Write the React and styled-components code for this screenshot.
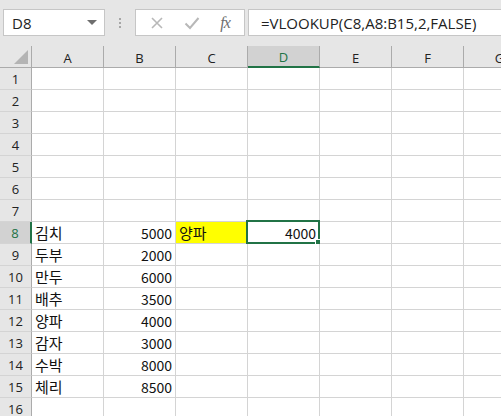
import React from "react";
import styled, { createGlobalStyle, css } from "styled-components";

const GREEN = "#217346";
const GRID = "#d4d4d4";
const HEAD_LINE = "#ababab";

var GlobalStyle = createGlobalStyle`
  html, body {
    margin: 0;
    padding: 0;
    background: #fff;
    overflow: hidden;
  }
  body {
    font-family: "Noto Sans CJK KR", "Noto Sans", sans-serif;
  }
`;

var Window = styled.div`
  width: 501px;
  height: 416px;
  overflow: hidden;
  background: #fff;
`;

var TopBar = styled.div`
  height: 46px;
  background: #e6e6e6;
  display: flex;
  align-items: flex-start;
  padding: 9px 0 0 3px;
  box-sizing: border-box;
`;

var Box = styled.div`
  height: 27px;
  box-sizing: border-box;
  background: #fff;
  border: 1px solid #c6c6c6;
  display: flex;
  align-items: center;
`;

var NameBox = styled(Box)`
  width: 102px;
  padding: 0 7px 0 8px;
  justify-content: space-between;
  font-family: "Open Sans", "Liberation Sans", sans-serif;
  font-size: 15px;
  color: #222;
`;

var Caret = styled.span`
  width: 0;
  height: 0;
  border-left: 5px solid transparent;
  border-right: 5px solid transparent;
  border-top: 5px solid #6e6e6e;
`;

var Dots = styled.div`
  width: 30px;
  height: 27px;
  display: flex;
  flex-direction: column;
  align-items: center;
  justify-content: center;
  gap: 2px;
  span {
    width: 2px;
    height: 2px;
    background: #a6a6a6;
  }
`;

var IconBox = styled(Box)`
  width: 110px;
  justify-content: space-around;
  padding: 0 4px;
  margin-right: 3px;
`;

var Fx = styled.span`
  font-family: "Liberation Serif", serif;
  font-style: italic;
  font-size: 16px;
  color: #6e6e6e;
  letter-spacing: -1px;
`;

var FormulaBox = styled(Box)`
  flex: 1;
  margin-right: -20px;
  padding-left: 12px;
  font-family: "Open Sans", "Liberation Sans", sans-serif;
  font-size: 15px;
  color: #222;
`;

var Sheet = styled.div`
  display: grid;
  grid-template-columns: 32px repeat(7, 72px);
  grid-auto-rows: 22px;
`;

var headBase = css`
  background: #e6e6e6;
  box-sizing: border-box;
  display: flex;
  align-items: center;
  justify-content: center;
  font-family: "Open Sans", "Liberation Sans", sans-serif;
  font-size: 13px;
  color: #222;
`;

var Corner = styled.div`
  ${headBase};
  position: relative;
  border-right: 1px solid ${HEAD_LINE};
  border-bottom: 1px solid ${HEAD_LINE};
  &:after {
    content: "";
    position: absolute;
    right: 3px;
    bottom: 3px;
    width: 0;
    height: 0;
    border-left: 14px solid transparent;
    border-bottom: 14px solid #b4b4b4;
  }
`;

var ColHeader = styled.div`
  ${headBase};
  border-right: 1px solid ${HEAD_LINE};
  border-bottom: 1px solid ${HEAD_LINE};
  padding-top: 2px;
  ${(p) =>
    p.$selected &&
    css`
      background: #d2d2d2;
      color: ${GREEN};
      border-bottom: 2px solid ${GREEN};
    `}
`;

var RowHeader = styled.div`
  ${headBase};
  border-right: 1px solid ${HEAD_LINE};
  border-bottom: 1px solid ${GRID};
  padding-top: 1px;
  ${(p) =>
    p.$selected &&
    css`
      background: #d2d2d2;
      color: ${GREEN};
      border-right: 2px solid ${GREEN};
    `}
`;

var Cell = styled.div`
  position: relative;
  box-sizing: border-box;
  border-right: 1px solid ${GRID};
  border-bottom: 1px solid ${GRID};
  background: ${(p) => p.$fill || "#fff"};
  display: flex;
  align-items: flex-end;
  justify-content: ${(p) => (p.$right ? "flex-end" : "flex-start")};
  padding: 0 3px 0 3px;
  font-size: ${(p) => (p.$right ? "14px" : "15px")};
  line-height: 20px;
  color: #111;
  white-space: nowrap;
`;

var Selection = styled.div`
  position: absolute;
  left: -2px;
  top: -2px;
  right: -1px;
  bottom: -1px;
  border: 2px solid ${GREEN};
  pointer-events: none;
`;

var FillHandle = styled.div`
  position: absolute;
  right: -4px;
  bottom: -4px;
  width: 5px;
  height: 5px;
  background: ${GREEN};
  border: 1px solid #fff;
`;

const columns = ["A", "B", "C", "D", "E", "F", "G"];

const data = {
  8: { A: "김치", B: "5000", C: "양파", D: "4000" },
  9: { A: "두부", B: "2000" },
  10: { A: "만두", B: "6000" },
  11: { A: "배추", B: "3500" },
  12: { A: "양파", B: "4000" },
  13: { A: "감자", B: "3000" },
  14: { A: "수박", B: "8000" },
  15: { A: "체리", B: "8500" },
};

const rows = Array.from({ length: 16 }, (_, i) => i + 1);

function CrossIcon() {
  return (
    <svg width="14" height="14" viewBox="0 0 14 14">
      <path d="M2 2 L12 12 M12 2 L2 12" stroke="#b8b8b8" strokeWidth="1.6" />
    </svg>
  );
}

function CheckIcon() {
  return (
    <svg width="16" height="14" viewBox="0 0 16 14">
      <path d="M1.5 7.5 L6 12 L14.5 2" stroke="#b8b8b8" strokeWidth="2" fill="none" />
    </svg>
  );
}

export default function App() {
  return (
    <Window>
      <GlobalStyle />
      <TopBar>
        <NameBox>
          <span>D8</span>
          <Caret />
        </NameBox>
        <Dots>
          <span />
          <span />
          <span />
        </Dots>
        <IconBox>
          <CrossIcon />
          <CheckIcon />
          <Fx>fx</Fx>
        </IconBox>
        <FormulaBox>=VLOOKUP(C8,A8:B15,2,FALSE)</FormulaBox>
      </TopBar>
      <Sheet>
        <Corner />
        {columns.map((c) => (
          <ColHeader key={c} $selected={c === "D"}>
            {c}
          </ColHeader>
        ))}
        {rows.map((r) => (
          <React.Fragment key={r}>
            <RowHeader $selected={r === 8}>{r}</RowHeader>
            {columns.map((c) => {
              const v = data[r] && data[r][c];
              const numeric = v && /^\d+$/.test(v);
              const active = r === 8 && c === "D";
              return (
                <Cell
                  key={c}
                  $right={numeric}
                  $fill={r === 8 && c === "C" ? "#ffff00" : null}
                >
                  {v}
                  {active && (
                    <Selection>
                      <FillHandle />
                    </Selection>
                  )}
                </Cell>
              );
            })}
          </React.Fragment>
        ))}
      </Sheet>
    </Window>
  );
}
